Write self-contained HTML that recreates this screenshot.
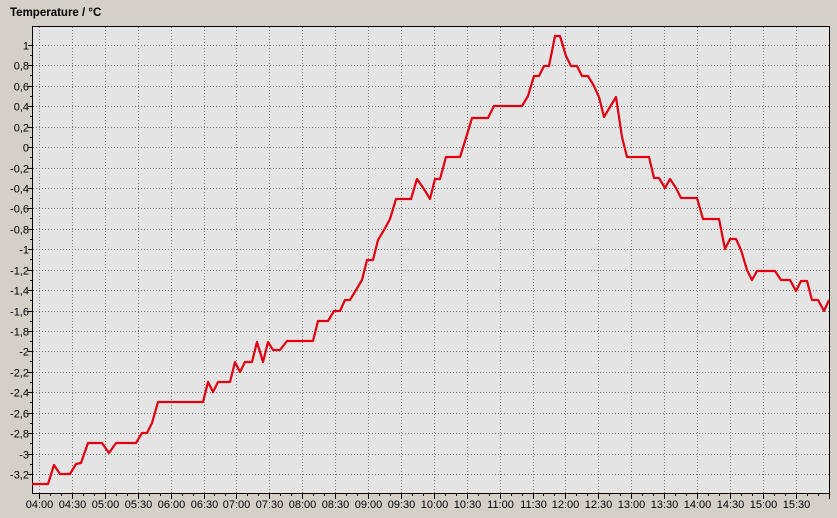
<!DOCTYPE html>
<html><head><meta charset="utf-8"><style>
html,body{margin:0;padding:0;background:#d4d0c8;width:837px;height:518px;overflow:hidden}
svg{display:block}
text{font-family:"Liberation Sans",sans-serif;font-size:11px;fill:#000}
</style></head><body>
<svg width="837" height="518" viewBox="0 0 837 518">
<text x="10" y="16" style="font-weight:bold;font-size:11.5px">Temperature / °C</text>
<rect x="32" y="26" width="797" height="467" fill="#e4e4e4"/>
<g id="grid" stroke="#777" stroke-width="1" stroke-dasharray="1,2" shape-rendering="crispEdges"></g>
<rect x="32.5" y="26.5" width="797" height="467" fill="none" stroke="#000" stroke-width="1"/>
<g id="ticks" stroke="#000" stroke-width="1" shape-rendering="crispEdges"></g>
<g id="labels"></g>
<polyline fill="none" stroke="#e00010" stroke-width="2.2" stroke-linejoin="round" points="32,484 48,484 54,465 60,474 70,474 76,464 81,463 88,443 102,443 109,453 116,443 136,443 142,433 147,433 152,423 158,402 203,402 208,382 213,392 218,382 230,382 235,362 240,372 245,362 252,362 257,342 263,362 268,342 273,350 280,350 287,341 313,341 318,321 328,321 334,311 340,311 345,300 350,300 356,290 362,280 367,260 373,260 378,240 384,230 390,219 396,199 411,199 417,179 424,189 430,199 435,179 440,179 446,157 460,157 466,138 472,118 488,118 494,106 522,106 528,96 534,76 539,76 544,66 549,66 555,36 560,36 566,56 571,66 577,66 582,76 588,76 594,86 599,97 604,117 610,107 616,97 622,137 627,157 649,157 654,178 659,178 665,188 670,179 676,188 681,198 697,198 703,219 719,219 725,249 730,239 736,239 741,250 747,270 752,280 757,271 763,271 775,271 781,280 790,280 796,291 801,281 807,281 812,300 818,300 824,311 829,300"/>
</svg>
<script>
const ns="http://www.w3.org/2000/svg";
const g=document.getElementById('grid'),t=document.getElementById('ticks'),l=document.getElementById('labels');
function el(p,n,a,txt){const e=document.createElementNS(ns,n);for(const k in a)e.setAttribute(k,a[k]);if(txt)e.textContent=txt;p.appendChild(e);}
for(let i=0;i<=21;i++){const v=1-i*0.2;const y=Math.round(45+i*20.43)+0.5;
 el(g,'line',{x1:33,x2:829,y1:y,y2:y});
 el(t,'line',{x1:28,x2:33,y1:y,y2:y});
 if(i<21) el(t,'line',{x1:30,x2:33,y1:y+10.2,y2:y+10.2});
 let s=(Math.abs(v)<1e-9?"0":(Math.round(v*10)/10).toString().replace('.',','));
 el(l,'text',{x:29,y:y+4,'text-anchor':'end'},s);}
const times=["04:00","04:30","05:00","05:30","06:00","06:30","07:00","07:30","08:00","08:30","09:00","09:30","10:00","10:30","11:00","11:30","12:00","12:30","13:00","13:30","14:00","14:30","15:00","15:30"];
for(let i=0;i<=24;i++){const x=Math.round(39+i*32.9)+0.5;
 if(i<24)el(g,'line',{x1:x,x2:x,y1:27,y2:493});
 el(t,'line',{x1:x,x2:x,y1:493,y2:499});
 for(let k=1;k<3;k++){const xm=Math.round(39+i*32.9+k*32.9/3)+0.5;if(xm<829)el(t,'line',{x1:xm,x2:xm,y1:493,y2:496});}
 if(i<24)el(l,'text',{x:x,y:508,'text-anchor':'middle'},times[i]);}
</script>
</body></html>
